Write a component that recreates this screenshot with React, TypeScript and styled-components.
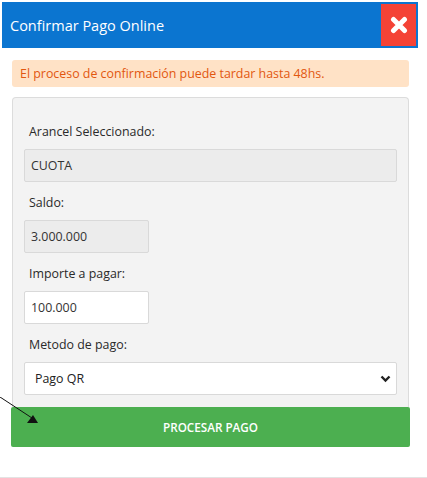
import styled, { createGlobalStyle } from 'styled-components'

const GlobalStyle = createGlobalStyle`
  html, body {
    margin: 0;
    padding: 0;
    background: #fff;
    font-family: 'Open Sans', 'Liberation Sans', sans-serif;
  }
  * {
    box-sizing: border-box;
  }
`

const fields = [
  { label: 'Arancel Seleccionado:', value: 'CUOTA', wide: true, readOnly: true },
  { label: 'Saldo:', value: '3.000.000', wide: false, readOnly: true },
  { label: 'Importe a pagar:', value: '100.000', wide: false, readOnly: false },
]

export default function App() {
  return (
    <>
      <GlobalStyle />
      <Modal>
        <Header>
          <Title>Confirmar Pago Online</Title>
          <CloseBtn aria-label="Cerrar">
            <svg width="18" height="18" viewBox="0 0 18 18">
              <path d="M3.5 3.5 L14.5 14.5 M14.5 3.5 L3.5 14.5" stroke="#fff" strokeWidth="5" strokeLinecap="round" />
            </svg>
          </CloseBtn>
        </Header>
        <Body>
          <Alert>El proceso de confirmación puede tardar hasta 48hs.</Alert>
          <Panel>
            {fields.map((f) => (
              <Field key={f.label}>
                <Label>{f.label}</Label>
                <Input $wide={f.wide} $readOnly={f.readOnly}>
                  {f.value}
                </Input>
              </Field>
            ))}
            <Field>
              <Label>Metodo de pago:</Label>
              <Select>
                Pago QR
                <svg width="11" height="8" viewBox="0 0 11 8">
                  <path d="M1.5 1.5 L5.5 5.5 L9.5 1.5" stroke="#222" strokeWidth="2.4" fill="none" />
                </svg>
              </Select>
            </Field>
          </Panel>
          <SubmitBtn>PROCESAR PAGO</SubmitBtn>
        </Body>
        <Footer />
        <Pointer width="44" height="30" viewBox="0 0 44 30">
          <line x1="0" y1="0" x2="32" y2="21" stroke="#111" strokeWidth="1" />
          <path d="M27 26 L38 26 L33 18 Z" fill="#111" />
        </Pointer>
      </Modal>
    </>
  )
}

const Modal = styled.div`
  position: relative;
  width: 427px;
  height: 478px;
  padding-top: 2px;
  background: #fff;
`

const Header = styled.div`
  display: flex;
  align-items: center;
  justify-content: space-between;
  height: 46px;
  margin: 0 9px 0 2px;
  padding: 0 2px 0 8px;
  background: #0b75d0;
`

const Title = styled.h4`
  margin: 0;
  color: #fff;
  font-size: 14.5px;
  font-weight: 500;
`

const CloseBtn = styled.button`
  display: flex;
  align-items: center;
  justify-content: center;
  width: 35px;
  height: 42px;
  border: none;
  padding: 0;
  background: #f44336;
  cursor: pointer;
`

const Body = styled.div`
  display: flex;
  flex-direction: column;
  padding: 12px 17px 0 11px;
`

const Alert = styled.div`
  margin: 0 1px;
  height: 27px;
  display: flex;
  align-items: center;
  padding: 0 8px;
  border-radius: 3px;
  background: #ffe2c6;
  color: #e2570f;
  font-size: 12.4px;
`

const Panel = styled.div`
  display: flex;
  flex-direction: column;
  gap: 12px;
  margin: 10px 1px 0;
  padding: 25px 11px 12px;
  background: #f3f3f3;
  border: 1px solid #dcdcdc;
  border-bottom: none;
  border-radius: 4px 4px 0 0;
`

const Field = styled.div`
  display: flex;
  flex-direction: column;
  gap: 9px;
`

const Label = styled.label`
  padding-left: 5px;
  color: #2a2a2a;
  font-size: 12.4px;
  font-weight: 500;
`

const Input = styled.div<{ $wide: boolean; $readOnly: boolean }>`
  width: ${(p) => (p.$wide ? '100%' : '125px')};
  height: 33px;
  display: flex;
  align-items: center;
  padding: 0 6px;
  background: ${(p) => (p.$readOnly ? '#ececec' : '#fff')};
  border: 1px solid #d9d9d9;
  border-radius: 2px;
  color: #333;
  font-size: 12.4px;
`

const Select = styled.div`
  height: 33px;
  display: flex;
  align-items: center;
  justify-content: space-between;
  padding: 0 5px 0 10px;
  background: #fff;
  border: 1px solid #d9d9d9;
  border-radius: 2px;
  color: #222;
  font-size: 12.4px;
`

const SubmitBtn = styled.button`
  height: 40px;
  border: none;
  border-radius: 2px;
  background: #4caf50;
  color: #fff;
  font-family: inherit;
  font-size: 11.7px;
  font-weight: 600;
  cursor: pointer;
`

const Footer = styled.div`
  position: absolute;
  left: 0;
  right: 0;
  bottom: 0;
  height: 1px;
  background: #e3e3e3;
`

const Pointer = styled.svg`
  position: absolute;
  left: 0;
  top: 397px;
  pointer-events: none;
`
